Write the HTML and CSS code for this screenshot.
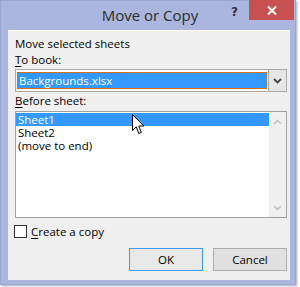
FILE: index.html
```html
<!DOCTYPE html>
<html>
<head>
<meta charset="utf-8">
<link rel="stylesheet" href="styles.css">
</head>
<body>
<div class="window">
  <div class="titlebar">
    <div></div>
    <div class="title">Move or Copy</div>
    <div class="controls">
      <span class="help">?</span>
      <span class="close"><svg width="10" height="9" viewBox="0 0 10 9"><path d="M1 0.5 L9 8.5 M9 0.5 L1 8.5" stroke="#fff" stroke-width="2"/></svg></span>
    </div>
  </div>
  <div class="content">
    <div class="label">Move selected sheets</div>
    <div class="label"><u>T</u>o book:</div>
    <div class="combo">
      <div class="combo-value"><span>Backgrounds.xlsx</span></div>
      <div class="combo-btn"><svg width="9" height="6" viewBox="0 0 9 6"><path d="M1 1 L4.5 4.5 L8 1" stroke="#444" stroke-width="1.8" fill="none"/></svg></div>
    </div>
    <div class="label"><u>B</u>efore sheet:</div>
    <div class="listbox">
      <div class="items">
        <div class="item sel">Sheet1</div>
        <div class="item">Sheet2</div>
        <div class="item">(move to end)</div>
        <svg class="cursor" width="13" height="21" viewBox="0 0 13 21"><path d="M0.5 0.5 L0.5 16.5 L4.3 12.8 L6.8 19.5 L9.3 18.4 L6.8 12 L11.8 12 Z" fill="#fff" stroke="#000" stroke-width="1"/></svg>
      </div>
      <div class="scroll">
        <svg width="9" height="6" viewBox="0 0 9 6"><path d="M1 5 L4.5 1.5 L8 5" stroke="#c2c2c2" stroke-width="1.6" fill="none"/></svg>
        <svg width="9" height="6" viewBox="0 0 9 6"><path d="M1 1 L4.5 4.5 L8 1" stroke="#c2c2c2" stroke-width="1.6" fill="none"/></svg>
      </div>
    </div>
    <div class="check">
      <span class="box"></span><span><u>C</u>reate a copy</span>
    </div>
    <div class="buttons">
      <button class="btn ok">OK</button>
      <button class="btn">Cancel</button>
    </div>
  </div>
</div>
</body>
</html>
```
FILE: styles.css
```css
html, body {
  margin: 0;
  padding: 0;
  background: #ffffff;
}
body {
  width: 300px;
  height: 287px;
  overflow: hidden;
  font-family: "Open Sans", "Noto Sans", sans-serif;
  font-size: 11.5px;
  color: #000;
}
.window {
  box-sizing: border-box;
  width: 296px;
  height: 285px;
  background: #abb6de;
  border: 1px solid #9aa6d2;
  display: flex;
  flex-direction: column;
  box-shadow: 1px 1px 2px rgba(60, 60, 80, 0.45);
}
.titlebar {
  height: 29px;
  display: grid;
  grid-template-columns: 1fr auto 1fr;
  align-items: start;
}
.title {
  font-size: 15px;
  color: #2b2b2b;
  padding-top: 4px;
  padding-left: 4px;
}
.controls {
  display: flex;
  justify-content: flex-end;
  align-items: flex-start;
  margin-top: -1px;
}
.help {
  font-family: "DejaVu Sans", sans-serif;
  font-weight: bold;
  font-size: 12px;
  color: #2e2e3a;
  margin-top: 5px;
  margin-right: 11px;
}
.close {
  width: 45px;
  height: 20px;
  background: #c75050;
  display: flex;
  align-items: center;
  justify-content: center;
  margin-right: 1px;
}
.content {
  box-sizing: border-box;
  margin: 0 5px 4px 7px;
  flex: 1;
  background: #f0f0f0;
  border-top: 1px solid #fafafa;
  padding: 5px 3px 0 7px;
  display: flex;
  flex-direction: column;
}
.label {
  height: 16px;
  line-height: 16px;
  white-space: nowrap;
}
.label u, .check u {
  text-decoration-thickness: 1px;
  text-underline-offset: 2px;
}
.combo {
  box-sizing: border-box;
  height: 23px;
  margin-top: 1px;
  margin-bottom: 1px;
  border: 1px solid #a9a9a9;
  background: #fff;
  display: flex;
  padding: 1px 0 1px 1px;
}
.combo-value {
  flex: 1;
  background: #3399ff;
  outline: 1px dotted #d96a10;
  outline-offset: -1px;
  color: #fff;
  display: flex;
  align-items: center;
  padding-left: 2px;
  margin: 1px 1px 1px 0;
}
.combo-btn {
  width: 17px;
  margin: -2px -1px -2px 0;
  border: 1px solid #a9a9a9;
  background: #e6e6e6;
  display: flex;
  align-items: center;
  justify-content: center;
}
.listbox {
  box-sizing: border-box;
  height: 107px;
  margin-top: 2px;
  border: 1px solid #a0a0a0;
  background: #fff;
  display: flex;
}
.items {
  flex: 1;
  position: relative;
  padding-top: 1px;
}
.item {
  height: 13px;
  line-height: 13px;
  padding-left: 2px;
}
.item.sel {
  background: #3399ff;
  color: #fff;
}
.cursor {
  position: absolute;
  left: 116px;
  top: 2px;
}
.scroll {
  width: 17px;
  background: #f0f0f0;
  display: flex;
  flex-direction: column;
  justify-content: space-between;
  align-items: center;
  padding: 7px 0 6px;
}
.check {
  display: flex;
  align-items: center;
  gap: 4px;
  margin-top: 6px;
  margin-left: -1px;
  height: 14px;
}
.box {
  box-sizing: border-box;
  width: 13px;
  height: 13px;
  border: 1px solid #333;
  background: #fff;
}
.buttons {
  display: flex;
  justify-content: flex-end;
  gap: 10px;
  margin-top: 10px;
}
.btn {
  box-sizing: border-box;
  width: 74px;
  height: 23px;
  font-family: inherit;
  font-size: 11.5px;
  color: #000;
  background: #e1e1e1;
  border: 1px solid #adadad;
  border-radius: 0;
  padding: 0;
}
.btn.ok {
  background: #e8e8e8;
  border: 1px solid #3c9af0;
}
```
